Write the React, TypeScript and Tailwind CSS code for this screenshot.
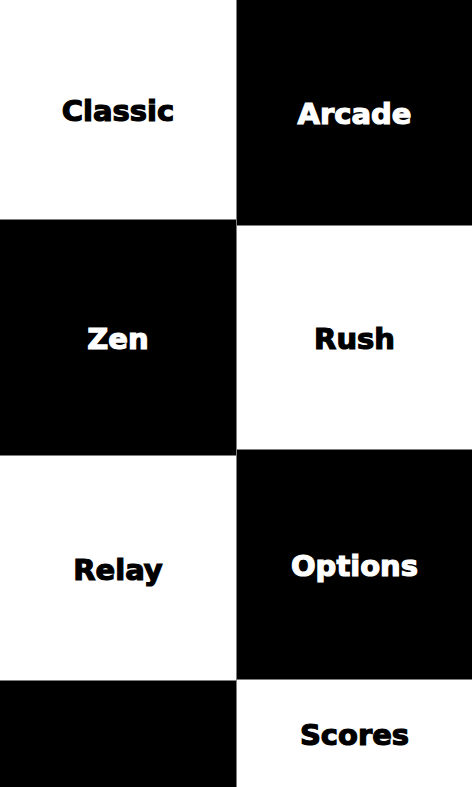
type Tile = { label?: string; dark: boolean; h: string };

const left: Tile[] = [
  { label: "Classic", dark: false, h: "h-[219px]" },
  { label: "Zen", dark: true, h: "h-[235px]" },
  { label: "Relay", dark: false, h: "h-[224px]" },
  { dark: true, h: "flex-1" },
];

const right: Tile[] = [
  { label: "Arcade", dark: true, h: "h-[225px]" },
  { label: "Rush", dark: false, h: "h-[223px]" },
  { label: "Options", dark: true, h: "h-[229px]" },
  { label: "Scores", dark: false, h: "flex-1" },
];

function TileBox({ tile }: { tile: Tile }) {
  return (
    <div
      className={`${tile.h} flex items-center justify-center ${
        tile.dark ? "bg-black text-white" : "bg-white text-black"
      }`}
    >
      {tile.label && (
        <span className="pt-[4px] font-['DejaVu_Sans',sans-serif] font-bold text-[29px] leading-none [-webkit-text-stroke:1.2px_currentColor]">
          {tile.label}
        </span>
      )}
    </div>
  );
}

export default function App() {
  return (
    <div className="flex h-[787px] w-[472px] gap-px bg-[#7f7f7f] overflow-hidden">
      <div className="flex w-[236px] flex-col gap-px">
        {left.map((t, i) => (
          <TileBox key={i} tile={t} />
        ))}
      </div>
      <div className="flex flex-1 flex-col gap-px">
        {right.map((t, i) => (
          <TileBox key={i} tile={t} />
        ))}
      </div>
    </div>
  );
}
